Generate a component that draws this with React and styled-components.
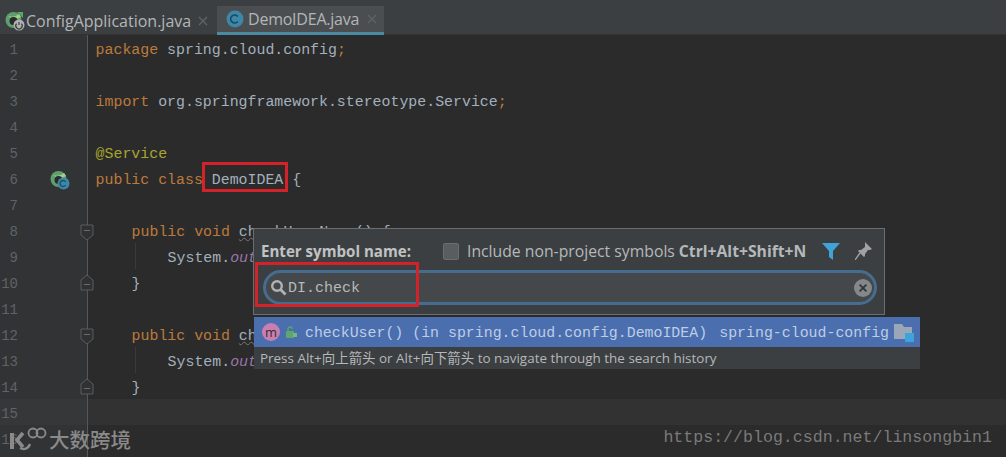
import styled, { createGlobalStyle } from "styled-components";

const GlobalStyle = createGlobalStyle`
  html, body {
    margin: 0;
    padding: 0;
    background: #2b2b2b;
  }
`;

const mono = `"Liberation Mono", "Noto Sans CJK SC", monospace`;
const ui = `"Open Sans", "Noto Sans", "Noto Sans CJK SC", sans-serif`;

const SpringIcon = ({ size = 20, badge = "c" }) => (
  <svg width={size} height={size} viewBox="0 0 20 20">
    <circle cx="8.5" cy="9" r="8" fill="#5f9e6e" />
    <path d="M3 5 Q9 7 14 3 L16 6 Q9 11 3 5Z" fill="#9fd08a" />
    <circle cx="8.5" cy="10" r="4" fill="#2b2b2b" />
    {badge === "c" ? (
      <>
        <circle cx="13.5" cy="13.5" r="6" fill="#3d87a8" />
        <path d="M15.6 11.8a3 3 0 1 0 0 3.4" fill="none" stroke="#1f4c60" strokeWidth="1.3" />
      </>
    ) : (
      <>
        <path d="M12 1 L18 1 L18 7Z" fill="#59a869" />
        <circle cx="14" cy="14" r="5.5" fill="#afb1b3" />
        <path d="M14 11v3M11.6 12.6a3.2 3.2 0 1 0 4.8 0" fill="none" stroke="#3c3f41" strokeWidth="1.2" />
      </>
    )}
  </svg>
);

const ClassIcon = () => (
  <svg width="18" height="18" viewBox="0 0 18 18">
    <circle cx="9" cy="9" r="8.5" fill="#3d87a8" />
    <path d="M11.8 6.6a4 4 0 1 0 0 4.8" fill="none" stroke="#1d4a5e" strokeWidth="1.6" />
  </svg>
);

const CloseIcon = () => (
  <svg width="10" height="10" viewBox="0 0 10 10">
    <path d="M1 1l8 8M9 1l-8 8" stroke="#5f6365" strokeWidth="1.4" />
  </svg>
);

const FoldIcon = ({ up }) => (
  <svg width="14" height="17" viewBox="0 0 14 17">
    <path
      d={up ? "M1 16V6L7 1l6 5v10Z" : "M1 1h12v10l-6 5-6-5Z"}
      fill="#2f3133"
      stroke="#5a5d5f"
    />
    <path d={up ? "M4 10.5h6" : "M4 6.5h6"} stroke="#6a6d6f" />
  </svg>
);

const SearchIcon = () => (
  <svg width="17" height="17" viewBox="0 0 17 17">
    <circle cx="7" cy="7" r="4.8" fill="none" stroke="#b0b2b4" strokeWidth="2.4" />
    <path d="M10.5 10.5L15.5 15.5" stroke="#b0b2b4" strokeWidth="2.8" />
  </svg>
);

const ClearIcon = () => (
  <svg width="18" height="18" viewBox="0 0 18 18">
    <circle cx="9" cy="9" r="9" fill="#85888a" />
    <path d="M5.6 5.6l6.8 6.8M12.4 5.6l-6.8 6.8" stroke="#333537" strokeWidth="1.8" />
  </svg>
);

const FilterIcon = () => (
  <svg width="18" height="17" viewBox="0 0 18 17">
    <path d="M0 0h18L11 8v9L7 14V8Z" fill="#3fa3d6" />
  </svg>
);

const PinIcon = () => (
  <svg width="17" height="18" viewBox="0 0 17 18">
    <path d="M10 0l7 7-2 1-2 0-3 4 0 2-1 1-6-6 1-1 2 0 4-3 0-2Z" fill="#a0a2a4" />
    <path d="M5 11L0 18" stroke="#a0a2a4" strokeWidth="1.4" />
  </svg>
);

const LockIcon = () => (
  <svg width="13" height="13" viewBox="0 0 13 13">
    <rect x="1" y="5" width="8" height="7" rx="1" fill="#5fa56d" />
    <path d="M3 5V3a2 2 0 0 1 4 0" fill="none" stroke="#5fa56d" strokeWidth="1.3" />
    <rect x="8" y="7" width="4" height="4" fill="#6fb97d" />
  </svg>
);

const FolderIcon = () => (
  <svg width="20" height="19" viewBox="0 0 20 19">
    <path d="M0 1h8l2 3h8v12H0Z" fill="#9aa7b8" />
    <rect x="11" y="10" width="9" height="9" fill="#3aa5dc" />
  </svg>
);

const LogoMark = () => (
  <svg width="40" height="26" viewBox="0 0 40 26" fill="none" stroke="#8a8a8a">
    <path d="M5 7v16" strokeWidth="4" />
    <path d="M16 7l-6 7 6 7" strokeWidth="3.6" />
    <path d="M13 22c4 2 8 1 10-4" strokeWidth="2.4" />
    <circle cx="26" cy="7" r="4.5" strokeWidth="1.8" />
    <circle cx="34" cy="7" r="4.5" strokeWidth="1.8" />
  </svg>
);

const Page = styled.div`
  position: relative;
  width: 1006px;
  height: 457px;
  overflow: hidden;
  background: #2b2b2b;
`;

const TabBar = styled.div`
  display: flex;
  height: 29px;
  padding-top: 6px;
  background: #3c3f41;
  box-shadow: inset 0 -1px 0 #323232;
`;

const Tab = styled.div`
  display: flex;
  align-items: center;
  box-sizing: border-box;
  height: 29px;
  width: ${(p) => p.$width}px;
  padding-left: ${(p) => p.$pad}px;
  background: ${(p) => (p.$active ? "#4b4e50" : "transparent")};
  border-bottom: ${(p) => (p.$active ? "3px solid #4a8aa3" : "none")};
  font-family: ${ui};
  font-size: 16px;
  letter-spacing: ${(p) => (p.$active ? "-0.23px" : "0")};
  color: #b3b6b8;
`;

const TabName = styled.span`
  margin: 0 ${(p) => p.$after}px 0 ${(p) => p.$gap}px;
`;

const Editor = styled.div`
  display: flex;
  flex-direction: column;
`;

const Row = styled.div`
  display: flex;
  height: 26px;
  background: ${(p) => (p.$current ? "#323232" : "transparent")};
`;

const Gutter = styled.div`
  position: relative;
  display: flex;
  align-items: center;
  box-sizing: border-box;
  flex: none;
  width: 88px;
  padding-top: 4px;
  background: ${(p) => (p.$current ? "#353739" : "#313335")};
  border-right: 1px solid #555759;
`;

const LineNumber = styled.span`
  width: 18px;
  text-align: right;
  font-family: ${mono};
  font-size: 14px;
  color: #606366;
`;

const Marker = styled.span`
  display: flex;
  margin-left: 32px;
`;

const Fold = styled.span`
  position: absolute;
  right: -7px;
  top: ${(p) => (p.$up ? 5 : 7)}px;
  display: flex;
`;

const Code = styled.code`
  display: block;
  height: 26px;
  padding-left: ${(p) => 7.6 + (p.$indent || 0) * 36}px;
  font-family: ${mono};
  font-size: 14.9px;
  line-height: 30px;
  white-space: pre;
  color: #a3b0bd;
  background: ${(p) =>
    p.$indent === 2 ? "linear-gradient(#3a3a3a, #3a3a3a) no-repeat 47px 0 / 1px 100%" : "none"};
`;

const Keyword = styled.span`
  color: #bd7a3c;
`;

const Annotation = styled.span`
  color: #aaa52f;
`;

const Field = styled.span`
  color: #9876aa;
  font-style: italic;
`;

const Wavy = styled.span`
  text-decoration: underline wavy #777;
  text-decoration-thickness: 1px;
`;

const Popup = styled.div`
  position: absolute;
  left: 253px;
  top: 228px;
  width: 632px;
  height: 87px;
  box-sizing: border-box;
  background: #3c3f41;
  border: 1px solid #6b6e70;
  padding: 7px 7px 0 7px;
`;

const PopupHead = styled.div`
  display: flex;
  align-items: center;
  height: 30px;
  font-family: ${ui};
  font-size: 15.75px;
  color: #b5b8ba;
  white-space: nowrap;
`;

const PopupTitle = styled.b`
  width: 182px;
  font-weight: 700;
  font-size: 15.1px;
  color: #c0c2c4;
`;

const Checkbox = styled.span`
  width: 14px;
  height: 15px;
  margin-right: 8px;
  border-radius: 2px;
  background: #5a5d5f;
  border: 1px solid #6a6d6f;
`;

const Shortcut = styled.b`
  margin-left: 4px;
  font-weight: 700;
  font-size: 15.7px;
`;

const HeadIcons = styled.span`
  display: flex;
  align-items: center;
  gap: 15px;
  margin-left: 16px;
`;

const SearchField = styled.div`
  display: flex;
  align-items: center;
  box-sizing: border-box;
  width: 614px;
  height: 35px;
  margin: 4px 0 0 2px;
  padding: 0 2px 0 4px;
  border: 3px solid #466d8f;
  border-radius: 18px;
  background: #45484a;
`;

const SearchText = styled.span`
  flex: 1;
  margin-left: 1px;
  padding-top: 1px;
  font-family: ${mono};
  font-size: 15px;
  color: #b6b8ba;
`;

const Results = styled.div`
  position: absolute;
  left: 254px;
  top: 317px;
  width: 666px;
`;

const ResultRow = styled.div`
  display: flex;
  align-items: center;
  box-sizing: border-box;
  height: 30px;
  padding: 0 6px 0 8px;
  background: #4b6eaf;
  font-family: ${mono};
  font-size: 14.9px;
  color: #bdcde6;
  white-space: pre;
`;

const MethodBadge = styled.span`
  display: flex;
  align-items: center;
  justify-content: center;
  width: 18px;
  height: 18px;
  border-radius: 50%;
  background: #c77fb0;
  color: #3c2a36;
  font-family: ${ui};
  font-size: 13px;
  line-height: 16px;
`;

const LockSlot = styled.span`
  display: flex;
  margin: 0 7px 0 5px;
`;

const ResultName = styled.span`
  flex: 1;
  padding-top: 2px;
`;

const ProjectName = styled.span`
  padding-top: 1px;
`;

const FolderSlot = styled.span`
  display: flex;
  margin-left: 5px;
`;

const Hint = styled.div`
  height: 22px;
  padding-left: 6px;
  background: #3c3f41;
  font-family: ${ui};
  font-size: 13.45px;
  line-height: 22px;
  color: #b5b8ba;
  white-space: nowrap;
`;

const RedBox = styled.div`
  position: absolute;
  left: ${(p) => p.$x}px;
  top: ${(p) => p.$y}px;
  width: ${(p) => p.$w}px;
  height: ${(p) => p.$h}px;
  box-sizing: border-box;
  border: 3px solid #d3222a;
`;

const Watermark = styled.div`
  position: absolute;
  left: 7px;
  top: 424px;
  display: flex;
  align-items: center;
  gap: 2px;
  font-family: "Noto Sans CJK SC", sans-serif;
  font-size: 20.5px;
  font-weight: 500;
  color: #8a8a8a;
`;

const SiteUrl = styled.div`
  position: absolute;
  right: 14px;
  top: 428px;
  font-family: ${mono};
  font-size: 16.6px;
  color: #7a7a7a;
`;

const lines = [
  { code: <><Keyword>package</Keyword> spring.cloud.config<Keyword>;</Keyword></> },
  {},
  { code: <><Keyword>import</Keyword> org.springframework.stereotype.Service<Keyword>;</Keyword></> },
  {},
  { code: <Annotation>@Service</Annotation> },
  {
    code: <><Keyword>public class</Keyword> DemoIDEA {"{"}</>,
    marker: true,
  },
  {},
  {
    code: <><Keyword>public void</Keyword> <Wavy>ch</Wavy>eckUserName() {"{"}</>,
    indent: 1,
    fold: "down",
  },
  { code: <>System.<Field>out</Field>.println();</>, indent: 2 },
  { code: "}", indent: 1, fold: "up" },
  {},
  {
    code: <><Keyword>public void</Keyword> <Wavy>ch</Wavy>eckUser() {"{"}</>,
    indent: 1,
    fold: "down",
  },
  { code: <>System.<Field>out</Field>.println();</>, indent: 2 },
  { code: "}", indent: 1, fold: "up" },
  { current: true },
  {},
  { hideNumber: true },
];

const App = () => {
  return (
    <Page>
      <GlobalStyle />
      <TabBar>
        <Tab $width={217} $pad={5}>
          <SpringIcon badge="power" />
          <TabName $gap={1} $after={7}>ConfigApplication.java</TabName>
          <CloseIcon />
        </Tab>
        <Tab $width={167} $pad={9} $active>
          <ClassIcon />
          <TabName $gap={4} $after={8}>DemoIDEA.java</TabName>
          <CloseIcon />
        </Tab>
      </TabBar>
      <Editor>
        {lines.map((line, i) => (
          <Row key={i} $current={line.current}>
            <Gutter $current={line.current}>
              <LineNumber>{line.hideNumber ? "" : i + 1}</LineNumber>
              {line.marker && (
                <Marker>
                  <SpringIcon />
                </Marker>
              )}
              {line.fold && (
                <Fold $up={line.fold === "up"}>
                  <FoldIcon up={line.fold === "up"} />
                </Fold>
              )}
            </Gutter>
            <Code $indent={line.indent}>{line.code}</Code>
          </Row>
        ))}
      </Editor>

      <RedBox $x={202} $y={162} $w={86} $h={30} />

      <Popup>
        <PopupHead>
          <PopupTitle>Enter symbol name:</PopupTitle>
          <Checkbox />
          Include non-project symbols
          <Shortcut>Ctrl+Alt+Shift+N</Shortcut>
          <HeadIcons>
            <FilterIcon />
            <PinIcon />
          </HeadIcons>
        </PopupHead>
        <SearchField>
          <SearchIcon />
          <SearchText>DI.check</SearchText>
          <ClearIcon />
        </SearchField>
      </Popup>

      <Results>
        <ResultRow>
          <MethodBadge>m</MethodBadge>
          <LockSlot>
            <LockIcon />
          </LockSlot>
          <ResultName>checkUser() (in spring.cloud.config.DemoIDEA)</ResultName>
          <ProjectName>spring-cloud-config</ProjectName>
          <FolderSlot>
            <FolderIcon />
          </FolderSlot>
        </ResultRow>
        <Hint>Press Alt+向上箭头 or Alt+向下箭头 to navigate through the search history</Hint>
      </Results>

      <RedBox $x={255} $y={262} $w={164} $h={45} />

      <Watermark>
        <LogoMark />
        大数跨境
      </Watermark>
      <SiteUrl>https://blog.csdn.net/linsongbin1</SiteUrl>
    </Page>
  );
};

export default App;
